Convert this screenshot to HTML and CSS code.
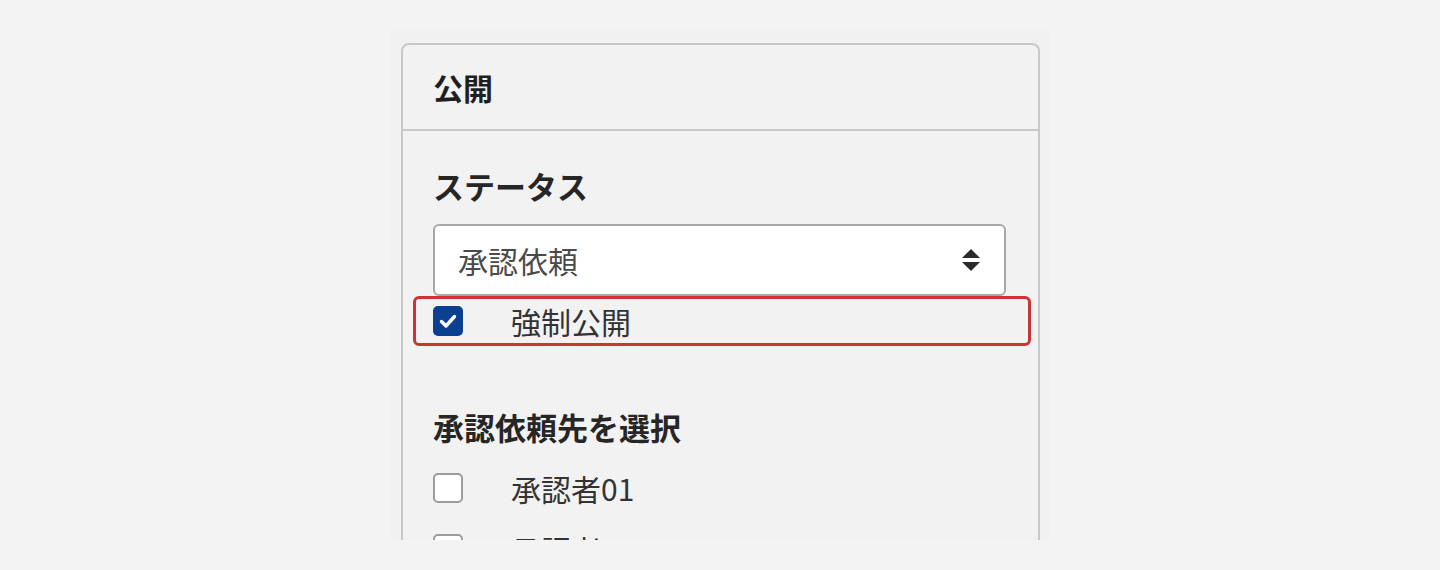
FILE: index.html
```html
<!DOCTYPE html>
<html lang="ja">
<head>
<meta charset="utf-8">
<title>公開</title>
<link rel="stylesheet" href="styles.css">
</head>
<body>
<div class="stage">
  <div class="frame">
    <section class="panel">
      <header class="panel-head">公開</header>
      <div class="panel-body">
        <h3 class="field-title title-status">ステータス</h3>
        <div class="select">
          <span class="select-value">承認依頼</span>
          <svg class="select-arrows" width="18" height="22" viewBox="0 0 18 22" aria-hidden="true">
            <path d="M9 0 L18 9 L0 9 Z" fill="#2b2b2b"/>
            <path d="M0 13 L18 13 L9 22 Z" fill="#2b2b2b"/>
          </svg>
        </div>
        <label class="check-row highlighted">
          <span class="checkbox checked">
            <svg width="30" height="30" viewBox="0 0 30 30" aria-hidden="true">
              <path d="M8.5 15.5 L13 20 L21.5 10.5" fill="none" stroke="#fff" stroke-width="3.4" stroke-linecap="round" stroke-linejoin="round"/>
            </svg>
          </span>
          <span class="check-label">強制公開</span>
        </label>
        <h3 class="field-title title-approver">承認依頼先を選択</h3>
        <div class="check-list">
          <label class="check-row">
            <span class="checkbox"></span>
            <span class="check-label">承認者01</span>
          </label>
          <label class="check-row">
            <span class="checkbox"></span>
            <span class="check-label">承認者02</span>
          </label>
        </div>
      </div>
    </section>
  </div>
</div>
</body>
</html>
```
FILE: styles.css
```css
* { box-sizing: border-box; }

html, body {
  margin: 0;
  padding: 0;
}

body {
  background: #f3f3f3;
  font-family: "Noto Sans CJK JP", "Noto Sans", sans-serif;
  color: #2a2a2a;
}

.stage {
  display: flex;
  justify-content: center;
  padding-top: 30px;
}

.frame {
  width: 660px;
  height: 510px;
  overflow: hidden;
  background: #f1f1f1;
  padding: 13px 10px 0 11px;
}

.panel {
  border: 2px solid #c8c8c8;
  border-radius: 8px;
  background: #f2f2f2;
  min-height: 700px;
}

.panel-head {
  height: 86px;
  display: flex;
  align-items: center;
  padding: 0 30px;
  border-bottom: 2px solid #c8c8c8;
  font-size: 30px;
  font-weight: 700;
  color: #1f1f1f;
}

.panel-body {
  padding: 0 32px 0 30px;
}

.field-title {
  margin: 0;
  font-size: 31px;
  font-weight: 700;
  line-height: 44px;
  color: #262626;
}

.title-status {
  margin-top: 33px;
  margin-bottom: 16px;
}

.title-approver {
  margin-top: 59px;
  margin-bottom: 14px;
}

.select {
  height: 72px;
  background: #fff;
  border: 2px solid #a8a8a8;
  border-radius: 6px;
  display: flex;
  align-items: center;
  justify-content: space-between;
  padding: 0 24px 0 23px;
}

.select-value {
  font-size: 30px;
  color: #4a4a4a;
}

.select-arrows {
  display: block;
}

.check-row {
  position: relative;
  display: flex;
  align-items: center;
  height: 50px;
  gap: 48px;
}

.check-list {
  display: flex;
  flex-direction: column;
  gap: 11px;
}

.highlighted::after {
  content: "";
  position: absolute;
  left: -20px;
  right: -25px;
  top: 0;
  bottom: 0;
  border: 3px solid #cc3333;
  border-radius: 6px;
  pointer-events: none;
}

.checkbox {
  flex: none;
  width: 30px;
  height: 30px;
  border-radius: 5px;
  background: #fff;
  border: 2px solid #9c9c9c;
  display: block;
}

.checkbox.checked {
  background: #0b3f8f;
  border: none;
}

.checkbox svg {
  display: block;
}

.check-label {
  font-size: 30px;
  color: #333;
}
```
